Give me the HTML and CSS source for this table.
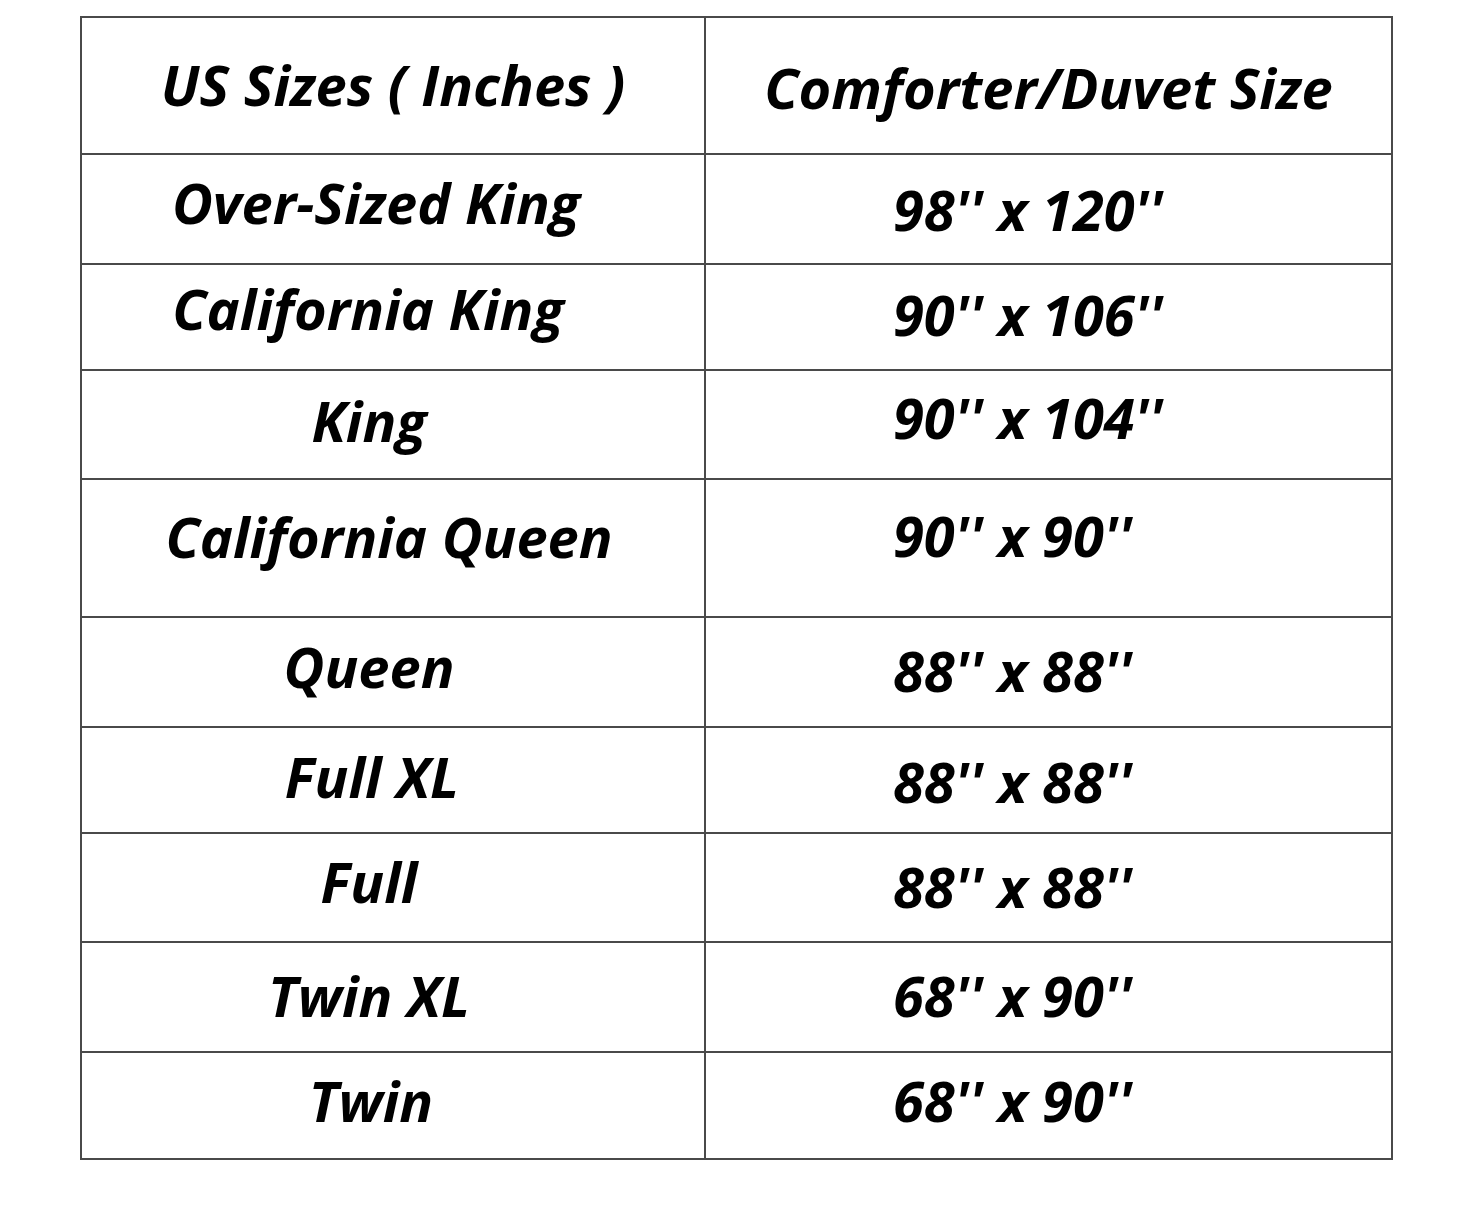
FILE: index.html
```html
<!DOCTYPE html>
<html lang="en">
<head>
<meta charset="utf-8">
<title>Comforter / Duvet Size Chart</title>
<link rel="stylesheet" href="styles.css">
</head>
<body>
<table class="chart">
  <colgroup>
    <col class="col-size">
    <col class="col-dim">
  </colgroup>
  <thead>
    <tr class="row-head">
      <th class="cell-name head-name">US Sizes ( Inches )</th>
      <th class="cell-dim head-dim">Comforter/Duvet Size</th>
    </tr>
  </thead>
  <tbody>
    <tr class="row r1"><td class="cell-name n-osk">Over-Sized King</td><td class="cell-dim">98'' x 120''</td></tr>
    <tr class="row r2"><td class="cell-name n-ck">California King</td><td class="cell-dim">90'' x 106''</td></tr>
    <tr class="row r3"><td class="cell-name">King</td><td class="cell-dim">90'' x 104''</td></tr>
    <tr class="row r4"><td class="cell-name n-cq">California Queen</td><td class="cell-dim">90'' x 90''</td></tr>
    <tr class="row r5"><td class="cell-name">Queen</td><td class="cell-dim">88'' x 88''</td></tr>
    <tr class="row r6"><td class="cell-name n-fxl">Full XL</td><td class="cell-dim">88'' x 88''</td></tr>
    <tr class="row r7"><td class="cell-name">Full</td><td class="cell-dim">88'' x 88''</td></tr>
    <tr class="row r8"><td class="cell-name">Twin XL</td><td class="cell-dim">68'' x 90''</td></tr>
    <tr class="row r9"><td class="cell-name n-tw">Twin</td><td class="cell-dim">68'' x 90''</td></tr>
  </tbody>
</table>
</body>
</html>
```
FILE: styles.css
```css
html, body {
  margin: 0;
  padding: 0;
  background: #ffffff;
}

body {
  padding: 16px 0 0 80px;
  font-family: "Open Sans", "Lato", "Liberation Sans", sans-serif;
  color: #000;
}

.chart {
  border-collapse: collapse;
  table-layout: fixed;
  width: 1311px;
}

.col-size { width: 624px; }
.col-dim { width: 687px; }

.chart .cell-name,
.chart .cell-dim {
  border: 2px solid #4a4a4a;
  padding-top: 0;
  padding-bottom: 8px;
  font-style: italic;
  font-weight: 700;
  font-size: 56px;
  line-height: 1;
  vertical-align: middle;
  white-space: nowrap;
}

.row-head { height: 137px; }
.r1 { height: 110px; }
.r2 { height: 106px; }
.r3 { height: 109px; }
.r4 { height: 138px; }
.r5 { height: 110px; }
.r6 { height: 106px; }
.r7 { height: 109px; }
.r8 { height: 110px; }
.r9 { height: 107px; }

/* horizontal placement */
.chart .cell-name {
  text-align: center;
  padding-left: 0;
  padding-right: 48px;
}

.chart .head-name { padding-right: 0; }
.chart .n-osk { padding-right: 34px; }
.chart .n-ck { padding-right: 50px; }
.chart .n-cq { padding-right: 8px; }
.chart .n-fxl { padding-right: 42px; }
.chart .n-tw { padding-right: 44px; }

.chart .cell-dim {
  text-align: left;
  padding-left: 187px;
  padding-right: 0;
}

.chart .head-dim {
  text-align: center;
  padding-left: 0;
}

/* vertical placement of the text inside each row */
.row-head .cell-name { padding-bottom: 3px; }
.row-head .cell-dim { padding-bottom: 0; padding-top: 3px; }

.r1 .cell-name { padding-bottom: 15px; }
.r1 .cell-dim { padding-bottom: 1px; }

.r2 .cell-name { padding-bottom: 18px; }
.r2 .cell-dim { padding-bottom: 6px; }

.r3 .cell-name { padding-bottom: 10px; }
.r3 .cell-dim { padding-bottom: 15px; }

.r4 .cell-name { padding-bottom: 24px; }
.r4 .cell-dim { padding-bottom: 26px; }

.r5 .cell-name { padding-bottom: 12px; }
.r5 .cell-dim { padding-bottom: 5px; }

.r6 .cell-name { padding-bottom: 8px; }
.r6 .cell-dim { padding-bottom: 0; padding-top: 1px; }

.r7 .cell-name { padding-bottom: 13px; }
.r7 .cell-dim { padding-bottom: 3px; }

.r8 .cell-name { padding-bottom: 4px; }
.r8 .cell-dim { padding-bottom: 4px; }

.r9 .cell-name { padding-bottom: 11px; }
.r9 .cell-dim { padding-bottom: 12px; }
```
